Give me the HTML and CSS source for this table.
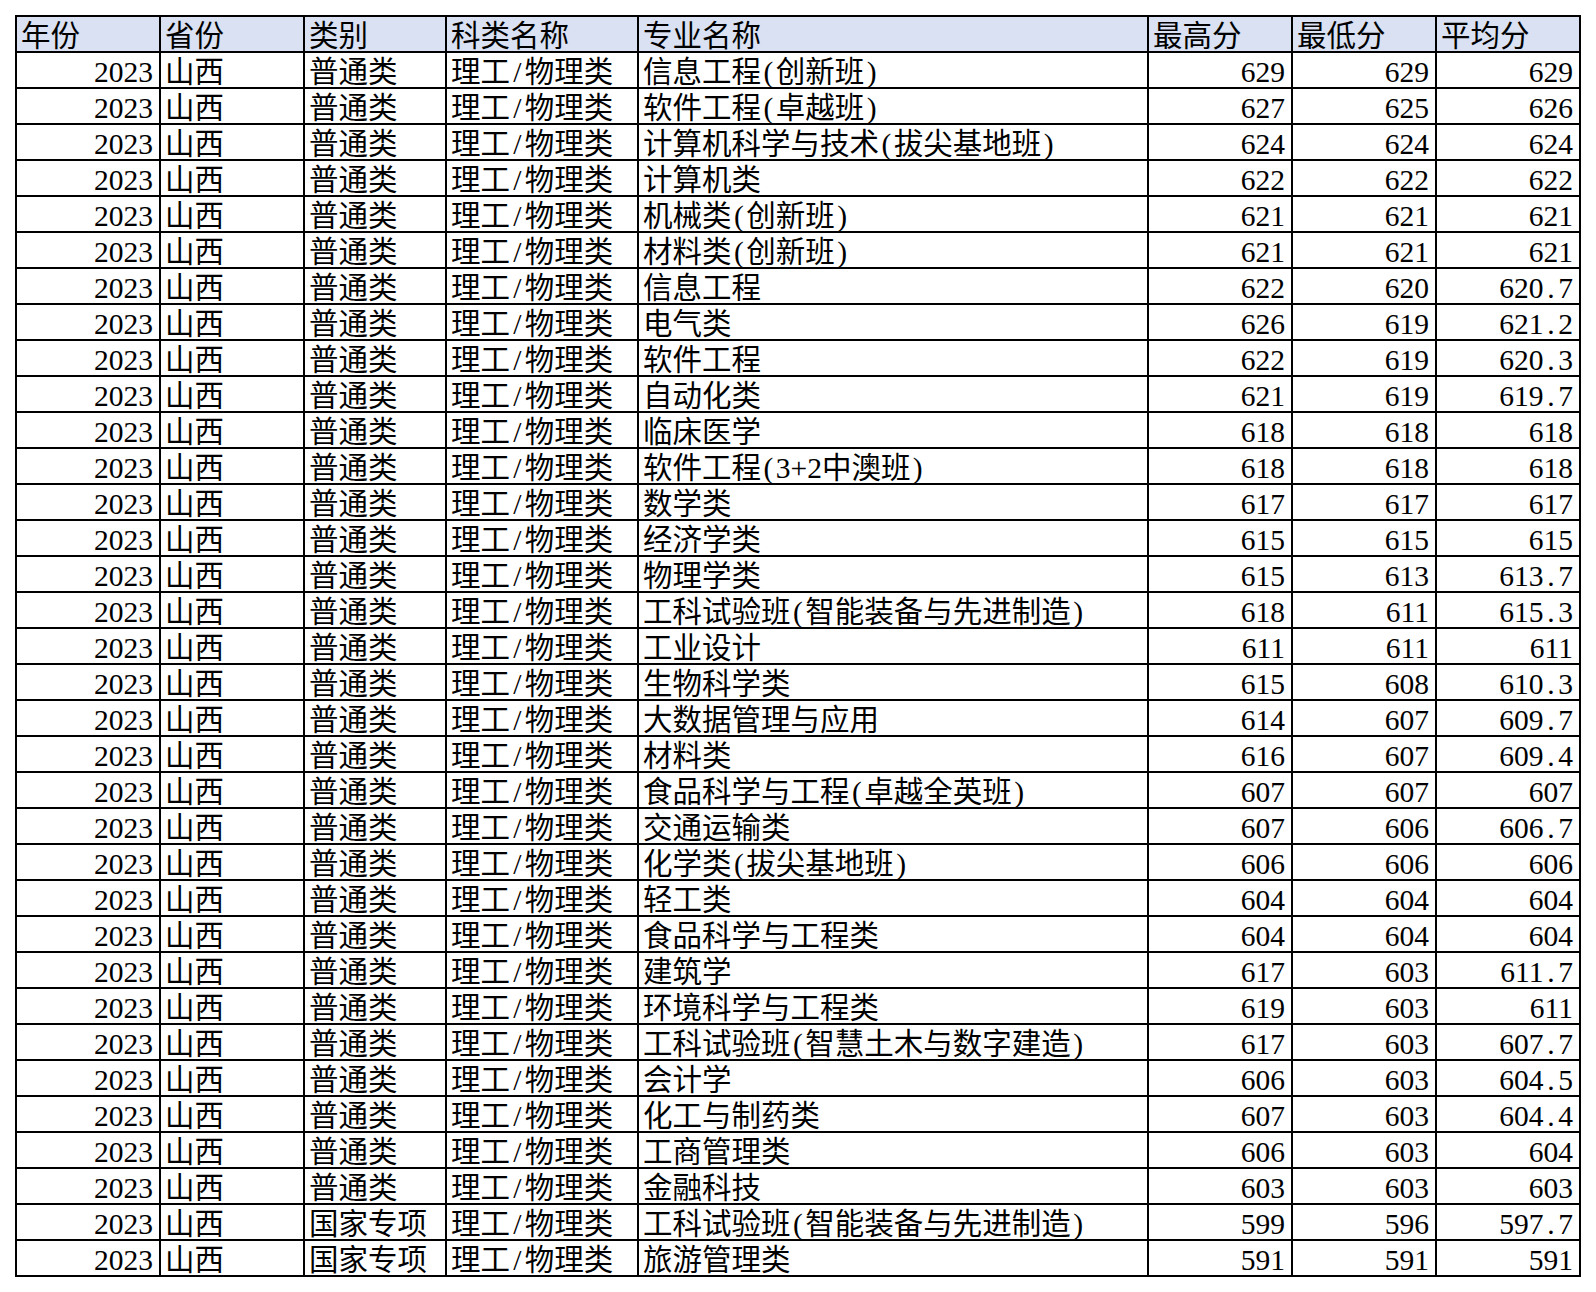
FILE: index.html
```html
<!DOCTYPE html>
<html lang="zh-CN">
<head>
<meta charset="utf-8">
<title>2023 山西 录取分数</title>
<link rel="stylesheet" href="styles.css">
</head>
<body>
<table class="sheet">
<colgroup>
<col class="c-year"><col class="c-prov"><col class="c-type"><col class="c-subj"><col class="c-major"><col class="c-num"><col class="c-num"><col class="c-num">
</colgroup>
<thead>
<tr><th>年份</th><th>省份</th><th>类别</th><th>科类名称</th><th>专业名称</th><th>最高分</th><th>最低分</th><th>平均分</th></tr>
</thead>
<tbody>
<tr><td class="n">2023</td><td>山西</td><td>普通类</td><td>理工<span class="h">/</span>物理类</td><td>信息工程<span class="h">(</span>创新班<span class="h">)</span></td><td class="n">629</td><td class="n">629</td><td class="n">629</td></tr>
<tr><td class="n">2023</td><td>山西</td><td>普通类</td><td>理工<span class="h">/</span>物理类</td><td>软件工程<span class="h">(</span>卓越班<span class="h">)</span></td><td class="n">627</td><td class="n">625</td><td class="n">626</td></tr>
<tr><td class="n">2023</td><td>山西</td><td>普通类</td><td>理工<span class="h">/</span>物理类</td><td>计算机科学与技术<span class="h">(</span>拔尖基地班<span class="h">)</span></td><td class="n">624</td><td class="n">624</td><td class="n">624</td></tr>
<tr><td class="n">2023</td><td>山西</td><td>普通类</td><td>理工<span class="h">/</span>物理类</td><td>计算机类</td><td class="n">622</td><td class="n">622</td><td class="n">622</td></tr>
<tr><td class="n">2023</td><td>山西</td><td>普通类</td><td>理工<span class="h">/</span>物理类</td><td>机械类<span class="h">(</span>创新班<span class="h">)</span></td><td class="n">621</td><td class="n">621</td><td class="n">621</td></tr>
<tr><td class="n">2023</td><td>山西</td><td>普通类</td><td>理工<span class="h">/</span>物理类</td><td>材料类<span class="h">(</span>创新班<span class="h">)</span></td><td class="n">621</td><td class="n">621</td><td class="n">621</td></tr>
<tr><td class="n">2023</td><td>山西</td><td>普通类</td><td>理工<span class="h">/</span>物理类</td><td>信息工程</td><td class="n">622</td><td class="n">620</td><td class="n">620<span class="h">.</span>7</td></tr>
<tr><td class="n">2023</td><td>山西</td><td>普通类</td><td>理工<span class="h">/</span>物理类</td><td>电气类</td><td class="n">626</td><td class="n">619</td><td class="n">621<span class="h">.</span>2</td></tr>
<tr><td class="n">2023</td><td>山西</td><td>普通类</td><td>理工<span class="h">/</span>物理类</td><td>软件工程</td><td class="n">622</td><td class="n">619</td><td class="n">620<span class="h">.</span>3</td></tr>
<tr><td class="n">2023</td><td>山西</td><td>普通类</td><td>理工<span class="h">/</span>物理类</td><td>自动化类</td><td class="n">621</td><td class="n">619</td><td class="n">619<span class="h">.</span>7</td></tr>
<tr><td class="n">2023</td><td>山西</td><td>普通类</td><td>理工<span class="h">/</span>物理类</td><td>临床医学</td><td class="n">618</td><td class="n">618</td><td class="n">618</td></tr>
<tr><td class="n">2023</td><td>山西</td><td>普通类</td><td>理工<span class="h">/</span>物理类</td><td>软件工程<span class="h">(</span>3+2中澳班<span class="h">)</span></td><td class="n">618</td><td class="n">618</td><td class="n">618</td></tr>
<tr><td class="n">2023</td><td>山西</td><td>普通类</td><td>理工<span class="h">/</span>物理类</td><td>数学类</td><td class="n">617</td><td class="n">617</td><td class="n">617</td></tr>
<tr><td class="n">2023</td><td>山西</td><td>普通类</td><td>理工<span class="h">/</span>物理类</td><td>经济学类</td><td class="n">615</td><td class="n">615</td><td class="n">615</td></tr>
<tr><td class="n">2023</td><td>山西</td><td>普通类</td><td>理工<span class="h">/</span>物理类</td><td>物理学类</td><td class="n">615</td><td class="n">613</td><td class="n">613<span class="h">.</span>7</td></tr>
<tr><td class="n">2023</td><td>山西</td><td>普通类</td><td>理工<span class="h">/</span>物理类</td><td>工科试验班<span class="h">(</span>智能装备与先进制造<span class="h">)</span></td><td class="n">618</td><td class="n">611</td><td class="n">615<span class="h">.</span>3</td></tr>
<tr><td class="n">2023</td><td>山西</td><td>普通类</td><td>理工<span class="h">/</span>物理类</td><td>工业设计</td><td class="n">611</td><td class="n">611</td><td class="n">611</td></tr>
<tr><td class="n">2023</td><td>山西</td><td>普通类</td><td>理工<span class="h">/</span>物理类</td><td>生物科学类</td><td class="n">615</td><td class="n">608</td><td class="n">610<span class="h">.</span>3</td></tr>
<tr><td class="n">2023</td><td>山西</td><td>普通类</td><td>理工<span class="h">/</span>物理类</td><td>大数据管理与应用</td><td class="n">614</td><td class="n">607</td><td class="n">609<span class="h">.</span>7</td></tr>
<tr><td class="n">2023</td><td>山西</td><td>普通类</td><td>理工<span class="h">/</span>物理类</td><td>材料类</td><td class="n">616</td><td class="n">607</td><td class="n">609<span class="h">.</span>4</td></tr>
<tr><td class="n">2023</td><td>山西</td><td>普通类</td><td>理工<span class="h">/</span>物理类</td><td>食品科学与工程<span class="h">(</span>卓越全英班<span class="h">)</span></td><td class="n">607</td><td class="n">607</td><td class="n">607</td></tr>
<tr><td class="n">2023</td><td>山西</td><td>普通类</td><td>理工<span class="h">/</span>物理类</td><td>交通运输类</td><td class="n">607</td><td class="n">606</td><td class="n">606<span class="h">.</span>7</td></tr>
<tr><td class="n">2023</td><td>山西</td><td>普通类</td><td>理工<span class="h">/</span>物理类</td><td>化学类<span class="h">(</span>拔尖基地班<span class="h">)</span></td><td class="n">606</td><td class="n">606</td><td class="n">606</td></tr>
<tr><td class="n">2023</td><td>山西</td><td>普通类</td><td>理工<span class="h">/</span>物理类</td><td>轻工类</td><td class="n">604</td><td class="n">604</td><td class="n">604</td></tr>
<tr><td class="n">2023</td><td>山西</td><td>普通类</td><td>理工<span class="h">/</span>物理类</td><td>食品科学与工程类</td><td class="n">604</td><td class="n">604</td><td class="n">604</td></tr>
<tr><td class="n">2023</td><td>山西</td><td>普通类</td><td>理工<span class="h">/</span>物理类</td><td>建筑学</td><td class="n">617</td><td class="n">603</td><td class="n">611<span class="h">.</span>7</td></tr>
<tr><td class="n">2023</td><td>山西</td><td>普通类</td><td>理工<span class="h">/</span>物理类</td><td>环境科学与工程类</td><td class="n">619</td><td class="n">603</td><td class="n">611</td></tr>
<tr><td class="n">2023</td><td>山西</td><td>普通类</td><td>理工<span class="h">/</span>物理类</td><td>工科试验班<span class="h">(</span>智慧土木与数字建造<span class="h">)</span></td><td class="n">617</td><td class="n">603</td><td class="n">607<span class="h">.</span>7</td></tr>
<tr><td class="n">2023</td><td>山西</td><td>普通类</td><td>理工<span class="h">/</span>物理类</td><td>会计学</td><td class="n">606</td><td class="n">603</td><td class="n">604<span class="h">.</span>5</td></tr>
<tr><td class="n">2023</td><td>山西</td><td>普通类</td><td>理工<span class="h">/</span>物理类</td><td>化工与制药类</td><td class="n">607</td><td class="n">603</td><td class="n">604<span class="h">.</span>4</td></tr>
<tr><td class="n">2023</td><td>山西</td><td>普通类</td><td>理工<span class="h">/</span>物理类</td><td>工商管理类</td><td class="n">606</td><td class="n">603</td><td class="n">604</td></tr>
<tr><td class="n">2023</td><td>山西</td><td>普通类</td><td>理工<span class="h">/</span>物理类</td><td>金融科技</td><td class="n">603</td><td class="n">603</td><td class="n">603</td></tr>
<tr><td class="n">2023</td><td>山西</td><td>国家专项</td><td>理工<span class="h">/</span>物理类</td><td>工科试验班<span class="h">(</span>智能装备与先进制造<span class="h">)</span></td><td class="n">599</td><td class="n">596</td><td class="n">597<span class="h">.</span>7</td></tr>
<tr><td class="n">2023</td><td>山西</td><td>国家专项</td><td>理工<span class="h">/</span>物理类</td><td>旅游管理类</td><td class="n">591</td><td class="n">591</td><td class="n">591</td></tr>
</tbody>
</table>
</body>
</html>
```

FILE: styles.css
```css
html, body {
  margin: 0;
  padding: 0;
  background: #ffffff;
}

body {
  padding: 15px 0 0 15px;
}

.sheet {
  border-collapse: collapse;
  table-layout: fixed;
  width: 1566px;
  font-family: "Liberation Serif", "Noto Sans CJK SC", serif;
  font-size: 29.5px;
  font-weight: 400;
  color: #000000;
}

.c-year { width: 144px; }
.c-prov { width: 144px; }
.c-type { width: 142px; }
.c-subj { width: 192px; }
.c-major { width: 510px; }
.c-num { width: 144px; }

.sheet th,
.sheet td {
  border: 2px solid #000000;
  padding: 5px 6px 0 4px;
  line-height: 29px;
  text-align: left;
  font-weight: 400;
  white-space: nowrap;
  overflow: hidden;
}

.sheet th {
  background: #d9e1f2;
}

.sheet td.n {
  text-align: right;
}

.h {
  display: inline-block;
  width: 0.5em;
  text-align: center;
}
```
